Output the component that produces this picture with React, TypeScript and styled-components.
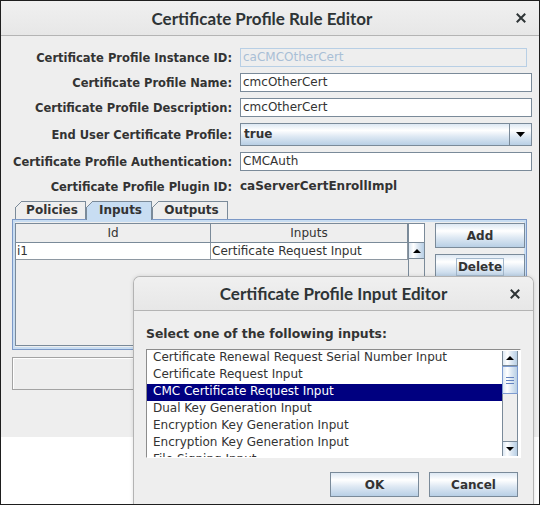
import React from 'react';
import styled, { createGlobalStyle } from 'styled-components';

const UI = `"DejaVu Sans", "Liberation Sans", sans-serif`;
const TITLE = `Lato, "Noto Sans", sans-serif`;
const OCEAN = 'linear-gradient(to bottom, #dde8f3 0%, #ffffff 30%, #dde8f3 60%, #b8cfe5 100%)';
const OCEAN_H = 'linear-gradient(to right, #dde8f3 0%, #ffffff 30%, #dde8f3 60%, #b8cfe5 100%)';

const GlobalStyle = createGlobalStyle`
  html, body { margin: 0; padding: 0; background: #ffffff; }
  body { font-family: ${UI}; font-size: 12px; color: #333333; }
  * { box-sizing: border-box; }
`;

const Window = styled.div`
  position: relative;
  width: 540px;
  height: 505px;
  border: 1px solid #1e1e1e;
  background: #ffffff;
  overflow: hidden;
  display: flex;
  flex-direction: column;
`;

const TitleBar = styled.div<{ $h: number; $pl: number; $radius?: boolean }>`
  flex: none;
  height: ${(p) => p.$h}px;
  display: flex;
  align-items: center;
  background: linear-gradient(to bottom, #f0f0f0, #e7e7e7);
  border-bottom: 1px solid #b4b4b4;
  padding-left: ${(p) => p.$pl}px;
  border-radius: ${(p) => (p.$radius ? '6px 6px 0 0' : '0')};
`;

const Title = styled.div`
  flex: 1;
  text-align: center;
  font: bold 17px ${TITLE};
  color: #2e3436;
  white-space: nowrap;
`;

const CloseBox = styled.div`
  width: 36px;
  flex: none;
  display: flex;
  align-items: center;
  justify-content: center;
`;

const Content = styled.div`
  flex: none;
  height: 401px;
  background: #eeeeee;
  padding: 12px 7px 0 11px;
  display: flex;
  flex-direction: column;
`;

const Form = styled.div`
  display: grid;
  grid-template-columns: 220px 1fr;
  column-gap: 8px;
  row-gap: 6px;
  align-items: center;
`;

const Label = styled.div`
  font: bold 11.5px ${UI};
  color: #333333;
  text-align: right;
  white-space: nowrap;
`;

const Field = styled.div<{ $disabled?: boolean }>`
  height: 19px;
  border: 1px solid ${(p) => (p.$disabled ? '#b8cfe5' : '#7a8a99')};
  background: ${(p) => (p.$disabled ? '#eeeeee' : '#ffffff')};
  color: ${(p) => (p.$disabled ? '#a9bfd6' : '#333333')};
  margin-right: ${(p) => (p.$disabled ? 5 : 0)}px;
  font: 12px ${UI};
  line-height: 17px;
  padding-left: 2px;
  white-space: nowrap;
  overflow: hidden;
`;

const Combo = styled.div`
  height: 23px;
  display: flex;
  border: 1px solid #7a8a99;
  background: ${OCEAN};
`;

const ComboText = styled.div`
  flex: 1;
  font: bold 12px ${UI};
  color: #333333;
  line-height: 21px;
  padding-left: 3px;
`;

const ComboArrow = styled.div`
  width: 22px;
  flex: none;
  border-left: 1px solid #7a8a99;
  display: flex;
  align-items: center;
  justify-content: center;
`;

const PluginValue = styled.div`
  font: bold 12px ${UI};
  color: #333333;
  height: 19px;
  line-height: 19px;
`;

const TabRow = styled.div`
  display: flex;
  align-items: flex-end;
  height: 18px;
  margin-top: 5px;
  padding-left: 3px;
`;

const Tab = styled.div<{ $selected?: boolean; $w: number }>`
  position: relative;
  z-index: ${(p) => (p.$selected ? 2 : 1)};
  width: ${(p) => p.$w}px;
  height: ${(p) => (p.$selected ? 19 : 18)}px;
  margin-bottom: ${(p) => (p.$selected ? -1 : 0)}px;
  border: 1px solid #7a8a99;
  border-bottom: none;
  background: ${(p) => (p.$selected ? '#c8ddf2' : '#eeeeee')};
  font: bold 12px ${UI};
  color: #333333;
  text-align: center;
  line-height: 16px;
  padding-left: 3px;
  &::before {
    content: '';
    position: absolute;
    left: -1px;
    top: -1px;
    width: 7px;
    height: 7px;
    background: linear-gradient(
      to bottom right,
      #eeeeee 0,
      #eeeeee calc(50% - 0.6px),
      #7a8a99 calc(50% - 0.6px),
      #7a8a99 calc(50% + 0.6px),
      transparent calc(50% + 0.6px)
    );
  }
`;

const TabPanel = styled.div`
  margin-right: 5px;
  border: 1px solid #7b98c6;
  background: #c8ddf2;
  padding: 2px;
`;

const TabInner = styled.div`
  height: 125px;
  background: #eeeeee;
  display: flex;
  gap: 10px;
`;

const ScrollPane = styled.div`
  width: 410px;
  flex: none;
  margin-top: 1px;
  height: 123px;
  border: 1px solid #7a8a99;
  background: #eeeeee;
  display: flex;
`;

const TableArea = styled.div`
  flex: 1;
  display: flex;
  flex-direction: column;
`;

const TRow = styled.div<{ $h: number }>`
  display: flex;
  height: ${(p) => p.$h}px;
`;

const HeaderCell = styled.div<{ $w?: number }>`
  ${(p) => (p.$w ? `width: ${p.$w}px; flex: none;` : 'flex: 1;')}
  border-right: 1px solid #7a8a99;
  border-bottom: 1px solid #7a8a99;
  background: #eeeeee;
  text-align: center;
  font: 12px ${UI};
  line-height: 18px;
  color: #333333;
`;

const Cell = styled.div<{ $w?: number }>`
  ${(p) => (p.$w ? `width: ${p.$w}px; flex: none;` : 'flex: 1;')}
  border-right: 1px solid #8e98a2;
  border-bottom: 1px solid #8e98a2;
  background: #ffffff;
  font: 12px ${UI};
  line-height: 16px;
  padding-left: 1px;
  color: #333333;
  white-space: nowrap;
  overflow: hidden;
`;

const VScrollCol = styled.div`
  width: 16px;
  flex: none;
  display: flex;
  flex-direction: column;
  border-left: 1px solid #7a8a99;
`;

const Corner = styled.div`
  height: 19px;
  flex: none;
  background: #ffffff;
  border-bottom: 1px solid #7a8a99;
`;

const Track = styled.div`
  flex: 1;
  background: #eeeeee;
`;

const ArrowButton = styled.div<{ $h: number; $top?: boolean }>`
  height: ${(p) => p.$h}px;
  flex: none;
  background: ${OCEAN_H};
  border-bottom: ${(p) => (p.$top ? '1px solid #7a8a99' : 'none')};
  border-top: ${(p) => (p.$top ? 'none' : '1px solid #7a8a99')};
  display: flex;
  align-items: center;
  justify-content: center;
`;

const ButtonCol = styled.div`
  width: 90px;
  flex: none;
  display: flex;
  flex-direction: column;
  gap: 6px;
  padding-top: 1px;
`;

const Button = styled.div<{ $w?: number }>`
  height: 25px;
  ${(p) => (p.$w ? `width: ${p.$w}px;` : '')}
  border: 1px solid #7a8a99;
  background: ${OCEAN};
  display: flex;
  align-items: center;
  justify-content: center;
  font: bold 12px ${UI};
  color: #333333;
`;

const Focus = styled.span`
  border: 1px solid #a3b8cc;
  padding: 0 1px;
  line-height: 16px;
`;

const BottomPanel = styled.div`
  margin-top: 7px;
  margin-right: 5px;
  height: 33px;
  border: 1px solid #a3a3a3;
  box-shadow: inset 1px 1px 0 #ffffff;
`;

const Modal = styled.div`
  position: absolute;
  z-index: 10;
  left: 132px;
  top: 275px;
  width: 401px;
  height: 240px;
  background: #eeeeee;
  border: 1px solid #b3b3b3;
  border-bottom: none;
  border-radius: 7px 7px 0 0;
  box-shadow: 0 0 4px rgba(0, 0, 0, 0.12);
  display: flex;
  flex-direction: column;
`;

const ModalBody = styled.div`
  padding: 15px 12px 0 12px;
  display: flex;
  flex-direction: column;
`;

const Prompt = styled.div`
  font: bold 12.4px ${UI};
  color: #333333;
  line-height: 15px;
  white-space: nowrap;
`;

const List = styled.div`
  margin-top: 8px;
  height: 109px;
  border-style: solid;
  border-width: 1px;
  border-color: #8c8c8c #ffffff #ffffff #8c8c8c;
  background: #ffffff;
  display: flex;
  padding-right: 2px;
`;

const Items = styled.div`
  flex: 1;
  height: 107px;
  overflow: hidden;
`;

const Item = styled.div<{ $selected?: boolean }>`
  height: 17px;
  line-height: 17px;
  padding-left: 6px;
  font: 12px ${UI};
  color: ${(p) => (p.$selected ? '#ffffff' : '#333333')};
  background: ${(p) => (p.$selected ? '#000080' : 'transparent')};
  white-space: nowrap;
`;

const ScrollBar = styled.div`
  width: 16px;
  flex: none;
  height: 105px;
  margin-top: 1px;
  border-left: 1px solid #7a8a99;
  border-right: 1px solid #7a8a99;
  background: #eeeeee;
  display: flex;
  flex-direction: column;
`;

const Thumb = styled.div`
  height: 28px;
  flex: none;
  border: 1px solid #7d9bd0;
  margin: 0 -1px;
  background: ${OCEAN_H};
  display: flex;
  flex-direction: column;
  align-items: center;
  justify-content: center;
  gap: 2px;
`;

const Grip = styled.div`
  width: 8px;
  height: 1px;
  background: #6382bf;
`;

const ListTrack = styled.div`
  flex: 1;
`;

const ModalButtons = styled.div`
  margin-top: 14px;
  padding-right: 3px;
  display: flex;
  justify-content: flex-end;
  gap: 10px;
`;

const CloseIcon = () => (
  <svg width="10" height="10" viewBox="0 0 10 10">
    <path d="M1.5 1.5 L8.5 8.5 M8.5 1.5 L1.5 8.5" stroke="#2e3436" strokeWidth="2" strokeLinecap="square" />
  </svg>
);

const Tri = ({ up, w = 9, h = 5 }: { up?: boolean; w?: number; h?: number }) => (
  <svg width={w} height={h} viewBox={`0 0 ${w} ${h}`}>
    <polygon points={up ? `0,${h} ${w},${h} ${w / 2},0` : `0,0 ${w},0 ${w / 2},${h}`} fill="#000000" />
  </svg>
);

const inputs = [
  'Certificate Renewal Request Serial Number Input',
  'Certificate Request Input',
  'CMC Certificate Request Input',
  'Dual Key Generation Input',
  'Encryption Key Generation Input',
  'Encryption Key Generation Input',
  'File Signing Input',
];

export default function App() {
  return (
    <>
      <GlobalStyle />
      <Window>
        <TitleBar $h={35} $pl={20}>
          <Title>Certificate Profile Rule Editor</Title>
          <CloseBox>
            <CloseIcon />
          </CloseBox>
        </TitleBar>
        <Content>
          <Form>
            <Label>Certificate Profile Instance ID:</Label>
            <Field $disabled>caCMCOtherCert</Field>
            <Label>Certificate Profile Name:</Label>
            <Field>cmcOtherCert</Field>
            <Label>Certificate Profile Description:</Label>
            <Field>cmcOtherCert</Field>
            <Label>End User Certificate Profile:</Label>
            <Combo>
              <ComboText>true</ComboText>
              <ComboArrow>
                <Tri w={9} h={5} />
              </ComboArrow>
            </Combo>
            <Label>Certificate Profile Authentication:</Label>
            <Field>CMCAuth</Field>
            <Label>Certificate Profile Plugin ID:</Label>
            <PluginValue>caServerCertEnrollImpl</PluginValue>
          </Form>
          <TabRow>
            <Tab $w={71}>Policies</Tab>
            <Tab $w={66} $selected>
              Inputs
            </Tab>
            <Tab $w={76}>Outputs</Tab>
          </TabRow>
          <TabPanel>
            <TabInner>
              <ScrollPane>
                <TableArea>
                  <TRow $h={19}>
                    <HeaderCell $w={195}>Id</HeaderCell>
                    <HeaderCell>Inputs</HeaderCell>
                  </TRow>
                  <TRow $h={17}>
                    <Cell $w={195}>i1</Cell>
                    <Cell>Certificate Request Input</Cell>
                  </TRow>
                </TableArea>
                <VScrollCol>
                  <Corner />
                  <ArrowButton $h={16} $top>
                    <Tri up w={8} h={4} />
                  </ArrowButton>
                  <Track />
                </VScrollCol>
              </ScrollPane>
              <ButtonCol>
                <Button>Add</Button>
                <Button>
                  <Focus>Delete</Focus>
                </Button>
              </ButtonCol>
            </TabInner>
          </TabPanel>
          <BottomPanel />
        </Content>

        <Modal>
          <TitleBar $h={34} $pl={36} $radius>
            <Title>Certificate Profile Input Editor</Title>
            <CloseBox>
              <CloseIcon />
            </CloseBox>
          </TitleBar>
          <ModalBody>
            <Prompt>Select one of the following inputs:</Prompt>
            <List>
              <Items>
                {inputs.map((t, i) => (
                  <Item key={i} $selected={i === 2}>
                    {t}
                  </Item>
                ))}
              </Items>
              <ScrollBar>
                <ArrowButton $h={15} $top>
                  <Tri up w={8} h={4} />
                </ArrowButton>
                <Thumb>
                  <Grip />
                  <Grip />
                  <Grip />
                </Thumb>
                <ListTrack />
                <ArrowButton $h={15}>
                  <Tri w={8} h={4} />
                </ArrowButton>
              </ScrollBar>
            </List>
            <ModalButtons>
              <Button $w={89}>OK</Button>
              <Button $w={89}>Cancel</Button>
            </ModalButtons>
          </ModalBody>
        </Modal>
      </Window>
    </>
  );
}
